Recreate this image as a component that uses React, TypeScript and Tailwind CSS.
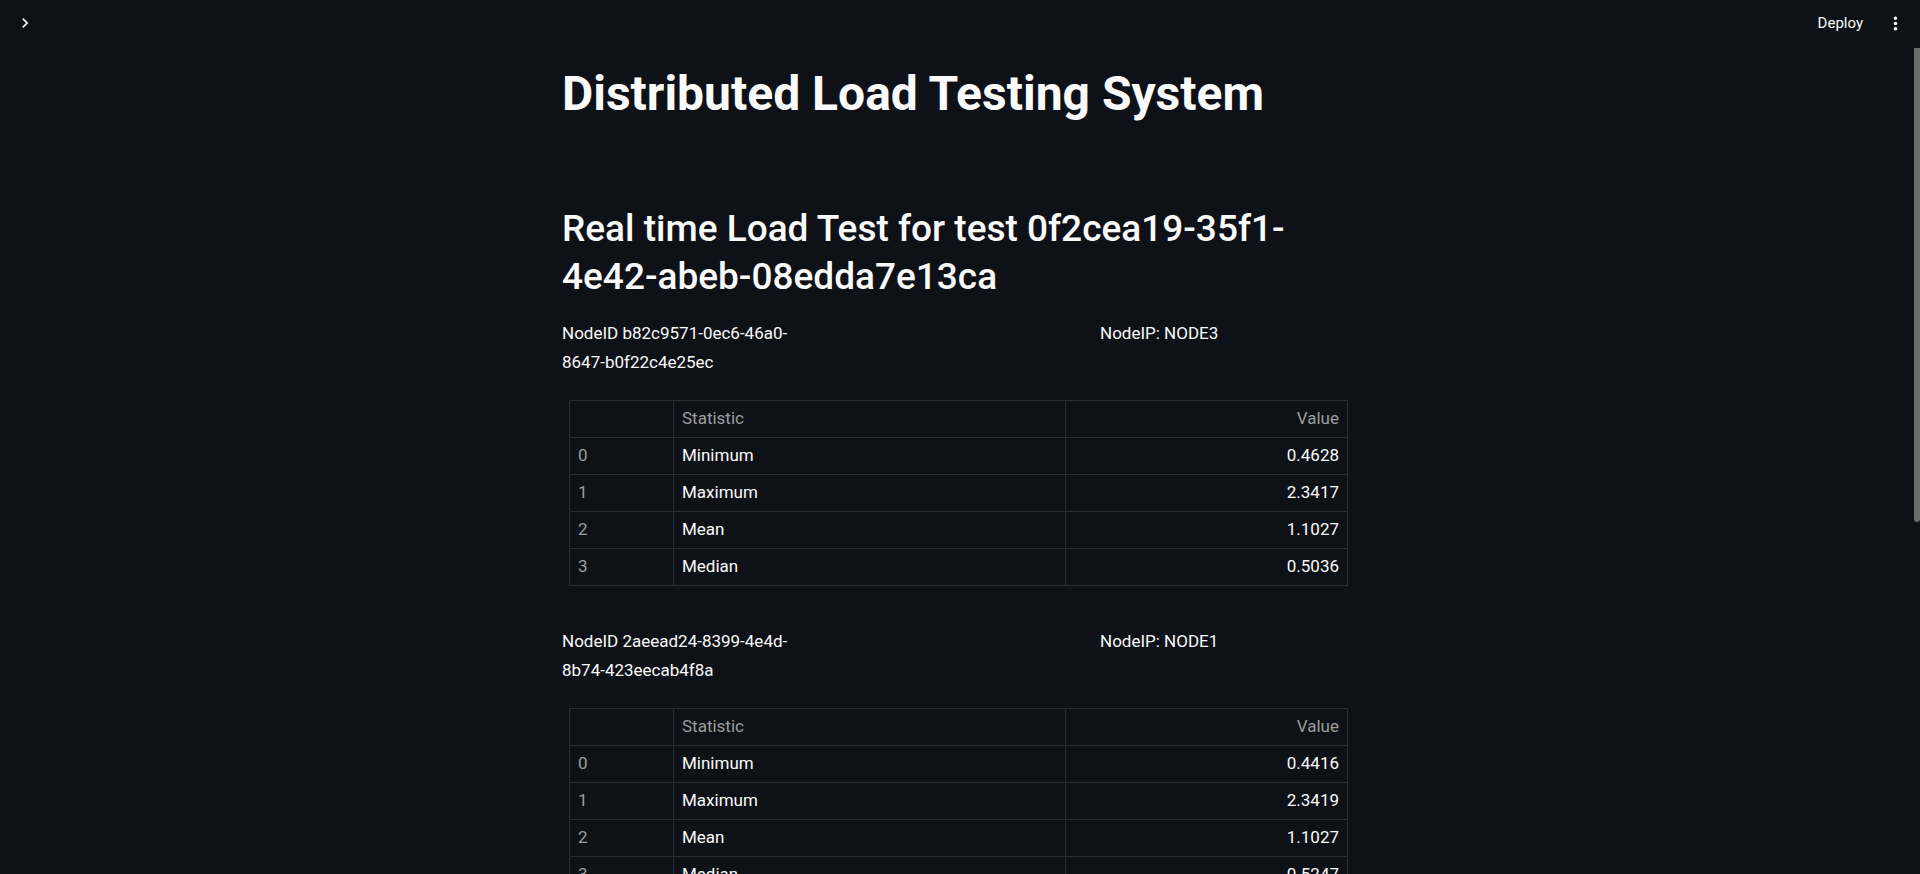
import React from 'react';

interface StatRow {
  name: string;
  value: string;
}

interface NodeResult {
  nodeId: string;
  nodeIp: string;
  stats: StatRow[];
}

const nodes: NodeResult[] = [
  {
    nodeId: 'b82c9571-0ec6-46a0-8647-b0f22c4e25ec',
    nodeIp: 'NODE3',
    stats: [
      { name: 'Minimum', value: '0.4628' },
      { name: 'Maximum', value: '2.3417' },
      { name: 'Mean', value: '1.1027' },
      { name: 'Median', value: '0.5036' },
    ],
  },
  {
    nodeId: '2aeead24-8399-4e4d-8b74-423eecab4f8a',
    nodeIp: 'NODE1',
    stats: [
      { name: 'Minimum', value: '0.4416' },
      { name: 'Maximum', value: '2.3419' },
      { name: 'Mean', value: '1.1027' },
      { name: 'Median', value: '0.5247' },
    ],
  },
];

function ChevronIcon() {
  return (
    <svg width="20" height="20" viewBox="0 0 24 24" fill="#fafafa">
      <path d="M10 6L8.59 7.41 13.17 12l-4.58 4.59L10 18l6-6z" />
    </svg>
  );
}

function MoreIcon() {
  return (
    <svg width="21" height="21" viewBox="0 0 24 24" fill="#fafafa">
      <path d="M12 8c1.1 0 2-.9 2-2s-.9-2-2-2-2 .9-2 2 .9 2 2 2zm0 2c-1.1 0-2 .9-2 2s.9 2 2 2 2-.9 2-2-.9-2-2-2zm0 6c-1.1 0-2 .9-2 2s.9 2 2 2 2-.9 2-2-.9-2-2-2z" />
    </svg>
  );
}

function StatsTable({ stats }: { stats: StatRow[] }) {
  return (
    <table className="ml-[7px] w-[778px] table-fixed border-collapse text-[17px]">
      <colgroup>
        <col className="w-[104px]" />
        <col className="w-[392px]" />
        <col className="w-[282px]" />
      </colgroup>
      <thead>
        <tr className="h-[37px]">
          <th className="border border-[#2b2d34] px-[8px]" />
          <th className="border border-[#2b2d34] px-[8px] text-left font-normal text-[#9c9d9f]">Statistic</th>
          <th className="border border-[#2b2d34] px-[8px] text-right font-normal text-[#9c9d9f]">Value</th>
        </tr>
      </thead>
      <tbody>
        {stats.map((row, i) => (
          <tr key={row.name} className="h-[37px]">
            <td className="border border-[#2b2d34] px-[8px] text-[#9c9d9f]">{i}</td>
            <td className="border border-[#2b2d34] px-[8px]">{row.name}</td>
            <td className="border border-[#2b2d34] px-[8px] text-right">{row.value}</td>
          </tr>
        ))}
      </tbody>
    </table>
  );
}

function NodeBlock({ node, first }: { node: NodeResult; first: boolean }) {
  return (
    <section className={first ? 'mt-[19px]' : 'mt-[41px]'}>
      <div className="flex text-[17px] leading-[28.5px]">
        <p className="w-[252px]">NodeID {node.nodeId}</p>
        <p className="ml-auto w-[252px]">NodeIP: {node.nodeIp}</p>
      </div>
      <div className="mt-[24px]">
        <StatsTable stats={node.stats} />
      </div>
    </section>
  );
}

export default function App() {
  return (
    <div className="relative h-[874px] overflow-hidden bg-[#0e1117] font-['Roboto',sans-serif] text-[#fafafa]">
      <header className="flex h-[46px] items-center justify-between pl-[15px] pr-[14px]">
        <button className="flex h-[20px] w-[20px] items-center justify-center">
          <ChevronIcon />
        </button>
        <div className="flex items-center gap-[22px]">
          <span className="text-[15px]">Deploy</span>
          <MoreIcon />
        </div>
      </header>

      <main className="flex justify-center pr-[6px]">
        <div className="w-[790px]">
          <h1 className="mt-[20px] text-[48px] font-bold leading-[55px]">Distributed Load Testing System</h1>
          <h2 className="mt-[84px] text-[37px] font-medium leading-[47.5px]">
            Real time Load Test for test 0f2cea19-35f1-4e42-abeb-08edda7e13ca
          </h2>
          {nodes.map((node, i) => (
            <NodeBlock key={node.nodeId} node={node} first={i === 0} />
          ))}
        </div>
      </main>

      {/* scrollbar thumb */}
      <div className="absolute right-0 top-[48px] h-[474px] w-[6px] rounded-b-[3px] bg-[#6b6b6b]" />
    </div>
  );
}
